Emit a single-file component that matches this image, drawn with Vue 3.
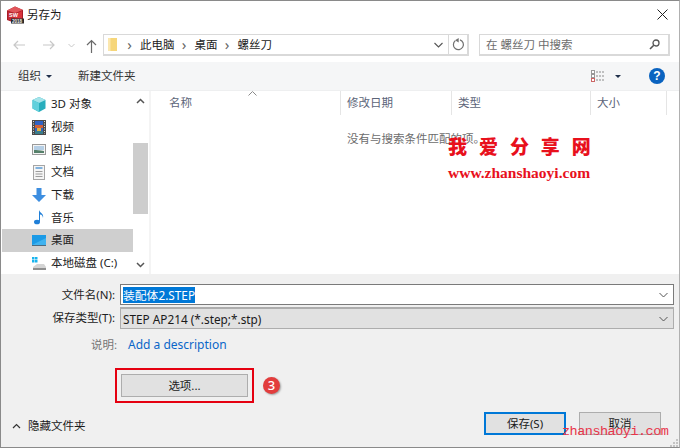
<script setup>
const navItems = [
  { label: '3D 对象', icon: 'cube' },
  { label: '视频', icon: 'film' },
  { label: '图片', icon: 'pic' },
  { label: '文档', icon: 'doc' },
  { label: '下载', icon: 'down' },
  { label: '音乐', icon: 'music' },
  { label: '桌面', icon: 'desk', active: true },
  { label: '本地磁盘 (C:)', icon: 'disk' },
]
const columns = [
  { label: '名称', w: 190 },
  { label: '修改日期', w: 111 },
  { label: '类型', w: 139 },
  { label: '大小', w: 76 },
]
</script>

<template>
  <div class="win">
    <header class="title">
      <svg class="appicon" width="17" height="18" viewBox="0 0 17 18">
        <path d="M0 4.500 8 .5l8 3.500v10l-8 3-8-3z" fill="#a81c26" />
        <path d="M0 4.500 8 .5l8 3.500-8 3z" fill="#e0555a" />
        <path d="M1 5.500 8 8v8l-7-2.500z" fill="#c42a34" />
        <path d="M8 8l7-3v9l-7 2z" fill="#d9323c" />
        <text x="2" y="11" class="ico-sw">SW</text>
        <rect x="4" y="12.500" width="13" height="5" fill="#2b2b2b" />
        <text x="5" y="16.800" class="ico-yr">2018</text>
      </svg>
      <span class="title-text">另存为</span>
      <svg class="close" width="11" height="11" viewBox="0 0 11 11"><path d="M.5.500l10 10M10.500.500l-10 10" stroke="#222" fill="none" /></svg>
    </header>

    <div class="nav">
      <svg class="nb n-back" width="12" height="10" viewBox="0 0 12 10"><path d="M12 5H1M5 1 1 5l4 4" stroke="#c8c8c8" stroke-width="1.200" fill="none" /></svg>
      <svg class="nb n-fwd" width="12" height="10" viewBox="0 0 12 10"><path d="M0 5h11M7 1l4 4-4 4" stroke="#c8c8c8" stroke-width="1.200" fill="none" /></svg>
      <svg class="nb n-drop" width="7" height="5" viewBox="0 0 7 5"><path d="M.5 1 3.500 4l3-3" stroke="#c8c8c8" fill="none" /></svg>
      <svg class="nb n-up" width="11" height="14" viewBox="0 0 11 14"><path d="M5.500 14V1.500M1 6l4.500-4.500L10 6" stroke="#6a6a6a" stroke-width="1.200" fill="none" /></svg>
      <div class="addr">
        <svg class="folder" width="9" height="13" viewBox="0 0 9 13"><rect width="9" height="13" fill="#f6d67a" /><rect x="0" width="2.500" height="13" fill="#fbe7ae" /></svg>
        <span class="sep">›</span><span class="crumb">此电脑</span>
        <span class="sep">›</span><span class="crumb">桌面</span>
        <span class="sep">›</span><span class="crumb">螺丝刀</span>
        <span class="spacer"></span>
        <svg class="a-drop" width="9" height="6" viewBox="0 0 9 6"><path d="M.5 1 4.500 5l4-4" stroke="#555" stroke-width="1.100" fill="none" /></svg>
        <span class="refresh">
          <svg width="13" height="13" viewBox="0 0 13 13"><path d="M8 1.900A5 5 0 1 1 3.200 2.800" stroke="#707070" stroke-width="1.200" fill="none" /><path d="M5.500 0v4.500L1.800 2.200z" fill="#707070" transform="translate(1.200 0)" /></svg>
        </span>
      </div>
      <div class="search">
        <span>在 螺丝刀 中搜索</span>
        <svg width="11" height="11" viewBox="0 0 11 11"><circle cx="7" cy="4" r="3" stroke="#555" stroke-width="1.300" fill="none" /><path d="M4.800 6.200 1 10" stroke="#555" stroke-width="1.600" /></svg>
      </div>
    </div>

    <div class="toolbar">
      <span class="t-org">组织</span>
      <i class="caret"></i>
      <span class="t-new">新建文件夹</span>
      <span class="spacer"></span>
      <svg class="t-view" width="14" height="12" viewBox="0 0 14 12">
        <rect x=".5" y=".5" width="3" height="3" fill="#fff" stroke="#999" />
        <rect x=".5" y="4.500" width="3" height="3" fill="#fff" stroke="#999" />
        <rect x=".5" y="8.500" width="3" height="3" fill="#fff" stroke="#c66" />
        <path d="M5 2h9M5 6h9M5 10h9" stroke="#8a8a8a" stroke-dasharray="2 1" />
      </svg>
      <i class="caret c-view"></i>
      <span class="help">?</span>
    </div>

    <div class="main">
      <aside class="side">
        <ul class="side-list">
          <li v-for="it in navItems" :key="it.label" class="side-item" :class="{ on: it.active }">
            <svg class="s-ico" width="14" height="15" viewBox="0 0 14 15">
              <template v-if="it.icon === 'cube'">
                <path d="M7 0 13.500 3v8.500L7 15 .5 11.500V3z" fill="#28aebd" />
                <path d="M7 0 13.500 3 7 6 .5 3z" fill="#a4e4ea" />
                <path d="M7 6v9L.5 11.500V3z" fill="#62d0dc" />
              </template>
              <template v-else-if="it.icon === 'film'">
                <rect width="14" height="15" fill="#4a4a4a" />
                <rect x="3" y="1" width="8" height="13" fill="#2f62c4" />
                <path d="M3 5h8v3H3z" fill="#d0603a" />
                <path d="M5 8h4v3H5z" fill="#e0b040" />
                <path d="M3 11h8v3H3z" fill="#3a7c8c" />
                <path d="M1.500 1v13M12.500 1v13" stroke="#ddd" stroke-dasharray="1 1.500" />
              </template>
              <template v-else-if="it.icon === 'pic'">
                <rect x=".5" y="2.500" width="13" height="10" fill="#f4f4f4" stroke="#9a9a9a" />
                <rect x="2" y="4" width="10" height="4" fill="#b5cfe6" />
                <path d="M2 11V8c3 0 5 .3 10 1v2z" fill="#55806a" />
              </template>
              <template v-else-if="it.icon === 'doc'">
                <rect x="1.500" y=".5" width="11" height="14" fill="#f5f5f5" stroke="#a5a5a5" />
                <path d="M3.500 3h7" stroke="#5a9bd6" stroke-width="1.500" />
                <path d="M3.500 6.500h7M3.500 9h7M3.500 11.500h7" stroke="#9c9c9c" />
              </template>
              <template v-else-if="it.icon === 'down'">
                <path d="M4.500 0h5v7H14L7 14 0 7h4.500z" fill="#3d8ee0" />
              </template>
              <template v-else-if="it.icon === 'music'">
                <ellipse cx="5" cy="12" rx="3" ry="2.300" fill="#1f7fd8" />
                <path d="M7 11.500V0c1 3 5 3.500 4 8-.3-3-2-3.500-3-3.500v7z" fill="#1f7fd8" />
              </template>
              <template v-else-if="it.icon === 'desk'">
                <rect y="2" width="14" height="10" fill="#1b9ae6" />
                <path d="M0 12 14 5v7z" fill="#3fb2ef" />
                <rect y="12" width="14" height="1" fill="#4c6a80" />
              </template>
              <template v-else>
                <path d="M0 1h2.500v2.500H0zM3 1h2.500v2.500H3zM0 4h2.500v2.500H0zM3 4h2.500v2.500H3z" fill="#18b4ee" />
                <path d="M1 11 5 8h7l2 3v2.500H1z" fill="#d4d4d4" />
                <path d="M1 12h13v2H1z" fill="#8f8f8f" />
              </template>
            </svg>
            <span class="s-label">{{ it.label }}</span>
          </li>
        </ul>
        <div class="sbar">
          <svg class="s-arrow" width="9" height="6" viewBox="0 0 9 6"><path d="M1 5 4.500 1.500 8 5" stroke="#555" stroke-width="1.500" fill="none" /></svg>
          <div class="thumb"></div>
          <span class="spacer"></span>
          <svg class="s-arrow" width="9" height="6" viewBox="0 0 9 6"><path d="M1 1l3.500 3.500L8 1" stroke="#555" stroke-width="1.500" fill="none" /></svg>
        </div>
      </aside>
      <section class="list">
        <div class="cols">
          <span v-for="c in columns" :key="c.label" class="col" :style="{ width: c.w + 'px' }">{{ c.label }}</span>
          <svg class="sort" width="9" height="5" viewBox="0 0 9 5"><path d="M.5 4.500 4.500.5l4 4" stroke="#8a8a8a" fill="none" /></svg>
        </div>
        <p class="empty">没有与搜索条件匹配的项。</p>
      </section>
    </div>

    <footer class="panel">
      <div class="row r-name">
        <label class="lab">文件名(N):</label>
        <div class="field input">
          <span class="sel">装配体2.STEP</span>
          <svg width="9" height="6" viewBox="0 0 9 6"><path d="M.5 1 4.500 5l4-4" stroke="#555" fill="none" /></svg>
        </div>
      </div>
      <div class="row r-type">
        <label class="lab">保存类型(T):</label>
        <div class="field combo">
          <span>STEP AP214 (*.step;*.stp)</span>
          <svg width="9" height="6" viewBox="0 0 9 6"><path d="M.5 1 4.500 5l4-4" stroke="#555" fill="none" /></svg>
        </div>
      </div>
      <div class="row r-desc">
        <label class="lab muted">说明:</label>
        <span class="link">Add a description</span>
      </div>
      <div class="opt-row">
        <div class="opt-box"><button class="btn opt">选项...</button></div>
        <span class="badge">3</span>
      </div>
      <div class="foot">
        <svg class="hide-ico" width="9" height="6" viewBox="0 0 9 6"><path d="M1 5 4.500 1.500 8 5" stroke="#333" stroke-width="1.200" fill="none" /></svg>
        <span class="hide">隐藏文件夹</span>
        <span class="spacer"></span>
        <button class="btn save">保存(S)</button>
        <button class="btn cancel">取消</button>
      </div>
      <svg class="grip" width="8" height="8" viewBox="0 0 8 8"><path d="M6 0h2v2H6zM3 3h2v2H3zM6 3h2v2H6zM0 6h2v2H0zM3 6h2v2H3zM6 6h2v2H6z" fill="#c4c4c4" /></svg>
    </footer>

    <div class="wm-cn">我 爱 分 享 网</div>
    <div class="wm-url">www.zhanshaoyi.com</div>
    <div class="wm-foot">zhanshaoyi.com</div>
  </div>
</template>

<style scoped>
.win {
  position: relative;
  width: 680px;
  height: 448px;
  box-sizing: border-box;
  border: 1px solid #8a8a8a;
  border-right-color: #b0b0b0;
  background: #fff;
  display: flex;
  flex-direction: column;
  overflow: hidden;
  font: 11.500px/16px "Noto Sans", "Noto Sans CJK SC", sans-serif;
  color: #1a1a1a;
}
.ico-sw { font: 700 5.500px "Liberation Sans", sans-serif; fill: #fff; }
.ico-yr { font: 700 4.500px "Liberation Sans", sans-serif; fill: #eee; }
.spacer { flex: 1; }
.title {
  height: 27px;
  display: flex;
  align-items: center;
  padding: 0 11px 0 6px;
  flex: none;
}
.appicon { margin-top: 1px; }
.title-text { margin-left: 3px; flex: 1; }
.nav {
  height: 34px;
  flex: none;
  display: flex;
  align-items: center;
  position: relative;
  padding: 0 9px 0 102px;
  gap: 10px;
}
.nb { position: absolute; }
.n-back { left: 12px; top: 12px; }
.n-fwd { left: 42px; top: 12px; }
.n-drop { left: 67px; top: 15px; }
.n-up { left: 85px; top: 11px; }
.addr, .search {
  height: 22px;
  box-sizing: border-box;
  border: 1px solid #d9d9d9;
  border-width: 1px 2px 2px 1px;
  display: flex;
  align-items: center;
  background: #fff;
}
.addr { width: 366px; padding-left: 4px; flex: none; }
.folder { margin-right: 8px; }
.sep { width: 9px; color: #666; font-size: 15px; line-height: 18px; text-align: center; margin: -2px 6px 0 0; }
.crumb { margin-right: 5px; color: #222; }
.a-drop { margin-right: 5px; }
.refresh {
  width: 18px;
  height: 20px;
  border-left: 1px solid #d9d9d9;
  display: flex;
  align-items: center;
  justify-content: center;
}
.search {
  flex: 1;
  justify-content: space-between;
  padding: 0 8px 0 6px;
  color: #6d6d6d;
}
.toolbar {
  height: 29px;
  flex: none;
  background: #f5f6f7;
  display: flex;
  align-items: center;
  padding: 0 14px 0 17px;
  border-bottom: 1px solid #eeeff0;
  box-sizing: border-box;
  color: #333;
}
.caret {
  width: 0;
  height: 0;
  border: 3px solid transparent;
  border-top: 3px solid #1f2f4a;
  border-bottom: 0;
  margin-left: 5px;
}
.t-new { margin-left: 26px; }
.c-view { margin: 0 28px 0 10px; }
.help {
  width: 16px;
  height: 16px;
  border-radius: 50%;
  background: #0a63c0;
  color: #fff;
  font: bold 12px/16px "Liberation Sans", sans-serif;
  text-align: center;
}
.main { height: 183px; flex: none; display: flex; overflow: hidden; }
.side {
  width: 148px;
  flex: none;
  display: flex;
  border-right: 2px solid #f4f4f4;
}
.side-list { list-style: none; margin: 2px 0 0 1px; padding: 0; width: 131px; flex: none; }
.side-item {
  height: 22.700px;
  display: flex;
  align-items: center;
  padding-left: 30px;
}
.side-item.on { background: #cfcfcf; }
.s-label { margin-left: 5px; white-space: nowrap; color: #222; }
.sbar {
  width: 15px;
  flex: none;
  display: flex;
  flex-direction: column;
  align-items: center;
  padding: 7px 0 6px;
  box-sizing: border-box;
}
.thumb { width: 15px; height: 71px; background: #cdcdcd; margin-top: 39px; }
.list { flex: 1; position: relative; min-width: 0; }
.cols {
  height: 24px;
  display: flex;
  color: #5b6478;
  position: relative;
}
.col {
  box-sizing: border-box;
  padding: 4px 0 0 6px;
  border-right: 1px solid #e5e5e5;
  flex: none;
}
.col:first-child { padding-left: 18px; }
.sort { position: absolute; left: 97px; top: 0; }
.empty {
  margin: 0;
  position: absolute;
  left: 196px;
  top: 40px;
  color: #6d6d6d;
}
.panel {
  flex: 1;
  background: #f0f0f0;
  position: relative;
  padding-top: 10px;
  box-sizing: border-box;
}
.row { display: flex; align-items: center; }
.lab { width: 115px; flex: none; text-align: right; color: #222; padding-right: 1px; box-sizing: border-box; }
.r-type { margin-top: 2px; }
.r-desc { margin-top: 6px; height: 20px; }
.field {
  width: 554px;
  height: 22px;
  box-sizing: border-box;
  margin-left: 4px;
  display: flex;
  align-items: center;
  justify-content: space-between;
  padding: 0 5px 0 2px;
  font-size: 11.800px;
}
.input { height: 21px; background: #fff; border: 1px solid #7a7a7a; }
.combo { background: #e1e1e1; border: 1px solid #adadad; border-top-width: 2px; }
.sel { background: #0078d7; color: #fff; }
.lab.muted { color: #767676; width: 116px; padding-right: 0; }
.link { margin-left: 11px; color: #0a66c8; font-size: 12px; }
.opt-row { display: flex; align-items: center; margin: 13px 0 0 114px; }
.opt-box { border: 2px solid #e50010; padding: 4px; width: 139px; box-sizing: border-box; }
.btn {
  font: inherit;
  color: #1a1a1a;
  background: #e1e1e1;
  border: 1px solid #adadad;
  padding: 0;
  height: 23px;
  box-sizing: border-box;
  display: block;
}
.opt { width: 127px; }
.badge {
  width: 17px;
  height: 17px;
  border-radius: 50%;
  background: #e23d3d;
  color: #fff;
  text-align: center;
  font-size: 13px;
  line-height: 17px;
  font-weight: 500;
  margin-left: 9px;
  box-shadow: 1px 1px 2px rgba(0,0,0,.35);
}
.foot {
  display: flex;
  align-items: center;
  margin-top: 9px;
  padding: 0 18px 0 11px;
}
.hide { margin-left: 7px; margin-top: 4px; }
.hide-ico { margin-top: 4px; }
.save, .cancel { width: 82px; }
.save { border: 2px solid #0078d7; }
.cancel { margin-left: 13px; }
.grip { position: absolute; right: 1px; bottom: 0; }
.wm-cn, .wm-url, .wm-foot { position: absolute; color: #e8101c; white-space: nowrap; pointer-events: none; }
.wm-cn { left: 447px; top: 133px; font: 900 19px/24px "Noto Sans CJK SC", sans-serif; word-spacing: 7.600px; }
.wm-url { left: 447px; top: 164px; font: 700 15.500px/16px "Liberation Serif", serif; }
.wm-foot { left: 561px; top: 423px; font: 13.500px/16px "Liberation Mono", monospace; color: #e8344a; letter-spacing: -.5px; }
</style>
